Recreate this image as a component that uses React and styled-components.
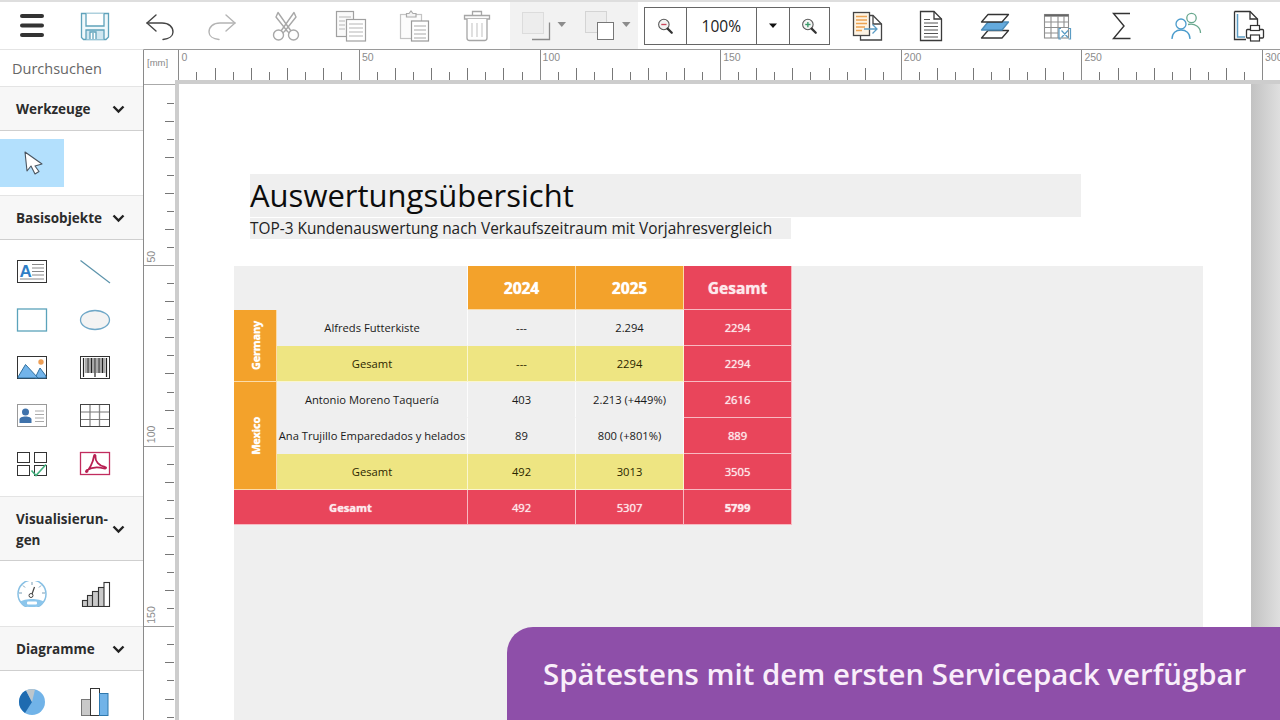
import React from 'react';
import styled, { createGlobalStyle } from 'styled-components';

const Global = createGlobalStyle`
  html, body { margin: 0; padding: 0; background: #fff; }
  body { font-family: "Open Sans", "Noto Sans", sans-serif; }
  * { box-sizing: border-box; }
`;

const Frame = styled.div`
  position: relative; width: 1280px; height: 720px; overflow: hidden;
  display: flex; flex-direction: column; background: #fff;
`;
const Toolbar = styled.header`
  height: 49px; flex: none; display: flex; align-items: center;
  border-top: 2px solid #dedede; background: #fff;
`;
const ToolButton = styled.div`
  width: 63.6px; height: 47px; flex: none;
  display: flex; align-items: center; justify-content: center;
`;
const ToolGroup = styled.div`
  display: flex; width: 128px; height: 47px; margin: 0 6px 0 1px; background: #f2f2f2; flex: none;
`;
const GroupButton = styled.div`
  width: 64px; height: 47px; display: flex; align-items: center;
`;
const ZoomBox = styled.div`
  width: 186px; height: 38px; flex: none; display: flex; border: 1px solid #666; margin-right: 6px;
`;
const ZoomCell = styled.div`
  width: ${p => p.$w}px; flex: none; display: flex; align-items: center; justify-content: center;
  font-size: 15.5px; color: #222;
  & + & { border-left: 1px solid #666; }
`;
const Body = styled.div`
  flex: 1; min-height: 0; display: flex;
`;
const Sidebar = styled.aside`
  width: 144px; flex: none; border-right: 1px solid #8a8a8a; border-top: 1px solid #e4e4e4; overflow: hidden;
`;
const SearchRow = styled.div`
  height: 36px; padding: 9px 0 0 12px; font-size: 14.5px; line-height: 20px; color: #666;
`;
const SectionHeader = styled.div`
  height: ${p => p.$h || 45}px; display: flex; align-items: center; justify-content: space-between;
  padding: 2px 18px 0 16px; background: #f7f7f7;
  border-top: 1px solid #e4e4e4; border-bottom: 1px solid #cfcfcf;
`;
const SectionTitle = styled.span`
  font-size: 13.5px; font-weight: 700; line-height: 21px; color: #2c2c2c;
`;
const ToolGrid = styled.div`
  display: grid; grid-template-columns: 63.5px 63.5px; grid-auto-rows: 48px;
  padding: ${p => p.$pad || '8px 0'};
`;
const ToolCell = styled.div`
  display: flex; align-items: center; justify-content: center;
  background: ${p => (p.$active ? '#b3e0fd' : 'transparent')};
`;
const Main = styled.main`
  flex: 1; min-width: 0; display: flex; border-top: 1px solid #9a9a9a;
`;
const LeftColumn = styled.div`
  width: 31px; flex: none; display: flex; flex-direction: column;
`;
const Corner = styled.div`
  height: 35px; flex: none; padding: 6px 0 0 3px; font-size: 9.5px; line-height: 14px; color: #888;
  font-family: "Liberation Sans", sans-serif; border-bottom: 1px solid #aaa;
`;
const RightColumn = styled.div`
  flex: 1; min-width: 0; display: flex; flex-direction: column;
`;
const RulerSvg = styled.svg`
  display: block; flex: none;
  text { font-family: "Liberation Sans", sans-serif; font-size: 10.5px; fill: #8c8c8c; }
`;
const Canvas = styled.div`
  flex: 1; min-height: 0; display: flex; padding: 4px 0 0 4px; background: #cdcdcd;
`;
const Page = styled.div`
  width: 1072px; flex: none; background: #fff; padding: 90px 0 0 55px;
`;
const Shade = styled.div`
  flex: 1; background: linear-gradient(90deg, #c2c2c2, #dfdfdf);
`;
const TitleBand = styled.div`
  width: 831px; height: 43px; margin-left: 16px; background: #efefef;
  font-size: 31px; line-height: 43px; color: #0c0c0c;
`;
const SubtitleBand = styled.div`
  width: 541px; height: 21px; margin: 1px 0 0 16px; background: #efefef;
  font-size: 15.4px; line-height: 21px; color: #222; white-space: nowrap;
`;
const TableBand = styled.div`
  width: 969px; height: 460px; margin-top: 27px; background: #efefef;
`;
const TableGrid = styled.div`
  display: grid; grid-template-columns: 43px 191px 108px 108px 108px;
  grid-template-rows: 44px 36px 36px 36px 36px 36px 35px; width: 558px;
`;
const tones = {
  plain: { bg: 'transparent', fg: '#1a1a1a', line: 'transparent', side: 'rgba(255,255,255,.8)', glow: 'none' },
  yellow: { bg: '#eee582', fg: '#2a2500', line: '#faf6d0', side: '#faf6d0', glow: 'none' },
  orange: { bg: '#f3a22b', fg: '#fff', line: '#fbdcaa', side: '#fbdcaa', glow: '0 0 1px #fff' },
  red: { bg: '#e9455b', fg: '#fde9ec', line: '#f8b9c2', side: '#f8b9c2', glow: '0 0 1px #fde9ec' },
};
const Cell = styled.div`
  display: flex; align-items: center; justify-content: center; white-space: nowrap;
  grid-column: span ${p => p.$cols || 1}; grid-row: span ${p => p.$rows || 1};
  font-size: ${p => (p.$head ? 15.5 : 11.2)}px; font-weight: ${p => (p.$strong || p.$head ? 700 : 400)};
  background: ${p => tones[p.$tone].bg}; color: ${p => tones[p.$tone].fg};
  text-shadow: ${p => tones[p.$tone].glow};
  border-right: 1px solid ${p => tones[p.$tone].side};
  border-bottom: 1px solid ${p => tones[p.$tone].line};
`;
const RegionText = styled.span`
  writing-mode: vertical-rl; transform: rotate(180deg); font-size: 11px; font-weight: 700; color: #fff;
  letter-spacing: -0.2px;
`;
const Banner = styled.div`
  position: absolute; right: 0; bottom: 0; width: 773px; height: 93px;
  display: flex; align-items: center; padding-left: 36px;
  background: #8e4fa9; border-top-left-radius: 26px;
  font-size: 29.4px; font-weight: 600; color: #f9eefa; white-space: nowrap;
`;

const Icon = ({ w = 40, h = 40, children }) => (
  <svg width={w} height={h} viewBox={`0 0 ${w} ${h}`} fill="none">{children}</svg>
);

const Hamburger = () => (
  <Icon>
    <rect x="8" y="8" width="24" height="4" rx="2" fill="#333" />
    <rect x="8" y="17.500" width="24" height="4" rx="2" fill="#333" />
    <rect x="8" y="27" width="24" height="4" rx="2" fill="#333" />
  </Icon>
);
const Save = () => (
  <Icon>
    <g stroke="#5fa2bb" strokeWidth="1.3">
      <path d="M6.500 7.500H33.500V31L31 33.500H8.500L6.500 31.500Z" fill="#f0f8fb" />
      <path d="M11 7.500V20H29V7.500" fill="#fff" />
      <path d="M11 33.500V24H29V33.500" fill="#cfe6f0" />
      <path d="M15 33V26H21V33" fill="#fff" />
      <path d="M18 27V33" />
    </g>
  </Icon>
);
const Undo = ({ c = '#444', flip }) => (
  <Icon>
    <g transform={flip ? 'matrix(-1 0 0 1 40 0)' : undefined} stroke={c} strokeWidth="1.400" strokeLinecap="round" strokeLinejoin="round">
      <path d="M17 9L8 17L17 25" />
      <path d="M8 17H23C30 17 34 21 34 26C34 30 30 33 24 33.500" />
    </g>
  </Icon>
);
const Scissors = () => (
  <Icon>
    <g stroke="#a8a8a8" strokeWidth="1.400" strokeLinejoin="round">
      <circle cx="12.500" cy="29" r="5" />
      <circle cx="27.500" cy="29" r="5" />
      <path d="M15 25L28 6.500L30 11L18.500 25.500L16.500 27" />
      <path d="M25 25L12 6.500L10 11L21.500 25.500L23.500 27" />
    </g>
  </Icon>
);
const Copy = () => (
  <Icon>
    <g stroke="#a0a0a0" strokeWidth="1.200">
      <rect x="6.500" y="5.500" width="17" height="25" fill="#fafafa" />
      <rect x="16.500" y="13.500" width="19" height="21.500" fill="#fff" />
      <path d="M9 11H21M9 15H15M9 19H15M9 23H15M19 18H33M19 22H33M19 26H33M19 30H33" stroke="#b5b5b5" />
    </g>
  </Icon>
);
const Paste = () => (
  <Icon>
    <g stroke="#c4c4c4" strokeWidth="1.200">
      <rect x="7.500" y="8.500" width="21" height="24" fill="#fcfcfc" />
      <path d="M13.500 11V7.500H16L18 5L20 7.500H23V11Z" fill="#f4f4f4" stroke="#aaa" />
      <rect x="18.500" y="15" width="17" height="20" fill="#fff" stroke="#999" />
      <path d="M21 20H33M21 24H33M21 28H33M21 32H33" stroke="#aaa" />
    </g>
  </Icon>
);
const Trash = () => (
  <Icon>
    <g stroke="#a6a6a6" strokeWidth="1.300">
      <path d="M7.500 9.500H32.500V13H7.500Z" fill="#fafafa" />
      <path d="M15.500 9.500V5.500H24.500V9.500" />
      <path d="M10 13V32C10 33.500 11 34.500 12.500 34.500H27.500C29 34.500 30 33.500 30 32V13" fill="#fff" />
      <path d="M15 17V31M20 17V31M25 17V31" stroke="#cfcfcf" />
    </g>
  </Icon>
);
const DupBack = () => (
  <Icon w={64}>
    <path d="M39.500 16.500V33.500H22" stroke="#8a8a8a" strokeWidth="1.300" />
    <rect x="12.500" y="6.500" width="21" height="21" fill="#ededed" stroke="#dcdcdc" />
    <path d="M47.500 16H56L51.800 21Z" fill="#8c8c8c" />
  </Icon>
);
const DupFront = () => (
  <Icon w={64}>
    <rect x="11.500" y="5.500" width="21" height="21" fill="#ededed" stroke="#d4d4d4" />
    <rect x="23.500" y="16.500" width="16" height="17" fill="#fff" stroke="#777" />
    <path d="M48 16H56.500L52.300 21Z" fill="#8c8c8c" />
  </Icon>
);
const Magnifier = ({ plus }) => (
  <svg width="18" height="18" viewBox="0 0 24 24" fill="none">
    <circle cx="10.500" cy="10" r="7" fill="#f3f3f3" stroke="#555" strokeWidth="1.400" />
    <path d="M15.500 15.500L21 21" stroke="#333" strokeWidth="3" strokeLinecap="round" />
    <path d="M7 10H14" stroke={plus ? '#3a9a6a' : '#c9455a'} strokeWidth="1.800" />
    {plus && <path d="M10.500 6.500V13.500" stroke="#3a9a6a" strokeWidth="1.800" />}
  </svg>
);
const Caret = () => (
  <Icon w={10} h={8}>
    <path d="M1 1.500H9L5 6Z" fill="#111" />
  </Icon>
);
const ExportDoc = () => (
  <Icon>
    <g strokeWidth="1.300">
      <path d="M12.500 9.500H25L33.500 18V34H12.500Z" fill="#fff" stroke="#444" />
      <path d="M25 9.500V18H33.500" stroke="#444" />
      <rect x="5.500" y="6.500" width="16" height="23" fill="#fdf3e3" stroke="#444" />
      <path d="M8 10.500H19M8 14H19M8 17.500H19M8 21H17M8 24.500H14" stroke="#eda352" />
      <path d="M16 23H29M24.500 18.500L29 23L24.500 27.500" stroke="#5b9cc4" />
    </g>
  </Icon>
);
const Doc = () => (
  <Icon>
    <g stroke="#3a3a3a" strokeWidth="1.300">
      <path d="M9.500 5.500H23L30.500 13V34.500H9.500Z" fill="#fff" />
      <path d="M23 5.500V13H30.500" />
      <path d="M13 17H27M13 20.500H27M13 24H27M13 27.500H27M13 31H27M13 13.500H19" stroke="#555" strokeWidth="1" />
    </g>
  </Icon>
);
const Layers = () => (
  <Icon>
    <g stroke="#333" strokeWidth="1.300" strokeLinejoin="round">
      <path d="M13 24.500H33.500L27 32H6.500Z" fill="#fff" />
      <path d="M13 16H33.500L27 24H6.500Z" fill="#64aadd" stroke="#4a8bb8" />
      <path d="M13 8.500H33.500L27 16H6.500Z" fill="#fff" />
    </g>
  </Icon>
);
const TableX = () => (
  <Icon>
    <g stroke="#8f8f8f" strokeWidth="1.100">
      <rect x="6.500" y="8.500" width="24" height="23.500" fill="#fff" />
      <path d="M6.500 9.500H30.500" stroke="#666" strokeWidth="2.200" />
      <path d="M6.500 16H30.500M6.500 21.500H30.500M6.500 27H20M13 10V32M20 10V32M26 10V22" />
    </g>
    <path d="M23 22.500H21V33H23M30.500 22.500H32.500V33H30.500M23.500 24.500L30 31.500M30 24.500L23.500 31.500" stroke="#5b9cc4" strokeWidth="1.200" />
  </Icon>
);
const Sigma = () => (
  <Icon>
    <path d="M28 7.500H11.500L22 20L11.500 32.500H28.500" stroke="#333" strokeWidth="1.400" />
  </Icon>
);
const Users = () => (
  <Icon>
    <circle cx="25.500" cy="12" r="4.700" stroke="#69a88e" strokeWidth="1.300" />
    <path d="M22 18.500C29 17 34.500 21 34.500 27" stroke="#69a88e" strokeWidth="1.300" />
    <circle cx="15" cy="18" r="5" fill="#fff" stroke="#4b9ccc" strokeWidth="1.300" />
    <path d="M6 33C6 27 10 24 15 24C20 24 24 27 24 33" stroke="#4b9ccc" strokeWidth="1.300" />
  </Icon>
);
const PrintDoc = () => (
  <Icon>
    <path d="M5.500 5.500H21L28.500 13V25" stroke="#333" strokeWidth="1.300" />
    <path d="M21 5.500V13H28.500" stroke="#333" strokeWidth="1.300" />
    <path d="M5.500 5.500V33.500H17" stroke="#333" strokeWidth="1.300" />
    <path d="M8.500 8V31H16" stroke="#5b9cc4" strokeWidth="1.500" />
    <rect x="17.500" y="23.500" width="17" height="8.500" rx="1" fill="#fff" stroke="#333" strokeWidth="1.300" />
    <rect x="21.500" y="19.500" width="9" height="5" fill="#fff" stroke="#333" strokeWidth="1.200" />
    <rect x="21.500" y="29" width="9" height="6" fill="#fff" stroke="#333" strokeWidth="1.200" />
  </Icon>
);

const Chevron = () => (
  <svg width="13" height="9" viewBox="0 0 13 9" fill="none">
    <path d="M1.500 1.500L6.500 6.500L11.500 1.500" stroke="#222" strokeWidth="2.400" />
  </svg>
);
const Pointer = () => (
  <Icon w={24} h={28}>
    <path d="M5 3L7 22L11 17L15 25L19 22.500L15 17L22 15Z" fill="#fff" stroke="#4a5560" strokeWidth="1.100" strokeLinejoin="round" />
  </Icon>
);
const S = ({ children }) => <Icon w={32} h={26}>{children}</Icon>;
const TextObj = () => (
  <S>
    <rect x="1.500" y="1.500" width="29" height="22" fill="#fff" stroke="#333" />
    <text x="3.500" y="17.500" fontFamily="Liberation Sans" fontWeight="700" fontSize="17" fill="#2f7ec6">A</text>
    <path d="M16 5.500H28M16 9H28M16 12.500H28M16 16H28M4 20H28" stroke="#888" />
  </S>
);
const LineObj = () => <S><path d="M1.500 1.500L31 24" stroke="#5c93ab" strokeWidth="1.200" /></S>;
const RectObj = () => <S><rect x="1.500" y="2" width="29" height="22" fill="#fff" stroke="#5ba3bb" strokeWidth="1.300" /></S>;
const EllipseObj = () => <S><ellipse cx="16" cy="13" rx="14.500" ry="9.500" fill="#f3f3f3" stroke="#6ea7c7" strokeWidth="1.300" /></S>;
const ImageObj = () => (
  <S>
    <rect x="1.500" y="1.500" width="29" height="22" fill="#fff" stroke="#333" />
    <path d="M19 23L24 13L30 21V23Z" fill="#72b4ea" stroke="#2f6f9e" />
    <path d="M2 22L9.500 9.500L22 23H2Z" fill="#72b4ea" stroke="#2f6f9e" />
    <circle cx="25" cy="7" r="2.700" fill="#ee9f55" />
  </S>
);
const BarcodeObj = () => (
  <S>
    <rect x="1.500" y="1.500" width="29" height="22" fill="#fff" stroke="#333" />
    <path d="M7 3V18M10.700 3V18M14.300 3V18M18 3V18M21.700 3V18M25.300 3V18" stroke="#aaa" strokeWidth="2.400" />
    <path d="M4.500 3V22M9 3V18M12.500 3V18M16 3V22M20 3V18M23.500 3V18M27.500 3V22" stroke="#222" strokeWidth="1.200" />
  </S>
);
const ContactObj = () => (
  <S>
    <rect x="1.500" y="1.500" width="29" height="22" fill="#fff" stroke="#999" />
    <circle cx="9.500" cy="9" r="3.500" fill="#3f72ab" />
    <path d="M3.500 20V16.500C3.500 14.500 6 13.500 9.500 13.500C13 13.500 15.500 14.500 15.500 16.500V20Z" fill="#3f72ab" />
    <path d="M19 8H28M19 11.500H28M19 15H28M19 18.500H28" stroke="#aaa" />
  </S>
);
const TableObj = () => (
  <S>
    <rect x="1.500" y="1.500" width="29" height="22" fill="#fff" stroke="#444" />
    <path d="M11 2V23M20.500 2V23" stroke="#888" strokeWidth="1.300" />
    <path d="M2 9H30M2 16.500H30" stroke="#777" />
  </S>
);
const FormObj = () => (
  <S>
    <g stroke="#333" fill="#fff">
      <rect x="1.500" y="1.500" width="12" height="10" />
      <rect x="18.500" y="1.500" width="12" height="10" />
      <rect x="1.500" y="14.500" width="12" height="10" />
      <rect x="18.500" y="14.500" width="12" height="10" />
    </g>
    <path d="M15.500 19.500L20 24.500L30 13.500" stroke="#43b07e" strokeWidth="1.600" />
  </S>
);
const PdfObj = () => (
  <S>
    <rect x="1.500" y="1.500" width="29" height="22" fill="#fff" stroke="#c12c5e" strokeWidth="1.300" />
    <path d="M7 21C10 19 14 12 15 5C15.500 3 17 4 16.500 6C16 10 20 15 26 16C28 16.500 27 18 25 17.500C20 16 13 16 8 19C6 20.500 7 22 9 20" stroke="#b81f52" strokeWidth="1.800" />
  </S>
);
const GaugeObj = () => (
  <S>
    <circle cx="16" cy="13" r="14" fill="#fff" stroke="#88c0e4" strokeWidth="1.500" />
    <path d="M4 21C8 17 24 17 28 21C23 28 9 28 4 21Z" fill="#8cc6ec" />
    <rect x="11" y="20.500" width="10" height="3" rx="1" fill="#fff" />
    <path d="M16 1V4M7 4.500L9 6.500M25 4.500L23 6.500M3 12H6M29 12H26" stroke="#7a9db5" />
    <circle cx="15" cy="14.500" r="2" stroke="#444" />
    <path d="M16 13L18.500 6" stroke="#444" strokeWidth="1.200" />
  </S>
);
const StairObj = () => (
  <S>
    <g stroke="#333" strokeWidth="1.100" fill="#c9c9c9">
      <rect x="3.500" y="19.500" width="5" height="6" />
      <rect x="8.500" y="14.500" width="5" height="11" />
      <rect x="13.500" y="10.500" width="6" height="15" />
      <rect x="19.500" y="6.500" width="6" height="19" />
      <rect x="25" y="1.500" width="5.500" height="24" fill="#fff" />
    </g>
  </S>
);
const PieObj = () => (
  <S>
    <circle cx="16" cy="13" r="13" fill="#71b3e8" />
    <path d="M16 13L10 1.500C6 3 3 8 3 13C3 17 5 21 9 24Z" fill="#1e6bb0" />
    <path d="M16 13L10 1.500C12 0.500 16 0 19 0.500Z" fill="#bcc6cc" />
  </S>
);
const ColumnObj = () => (
  <Icon w={32} h={30}>
    <rect x="2.500" y="12.500" width="9" height="16" fill="#c9c9c9" stroke="#777" />
    <rect x="11.500" y="1.500" width="9" height="27" fill="#fff" stroke="#333" />
    <rect x="20.500" y="6.500" width="8.500" height="22" fill="#71b3e8" stroke="#2f78ad" />
  </Icon>
);

const MM = 18.06;
const TopRuler = () => {
  const ticks = Array.from({ length: 62 }, (_, i) => i);
  return (
    <RulerSvg width="1105" height="30">
      {ticks.map(i => {
        const x = Math.round(3.4 + i * MM) + 0.5;
        const top = i % 10 === 0 ? 0 : i % 2 === 0 ? 18 : 22;
        return <path key={i} d={`M${x} ${top}V30`} stroke={i % 10 === 0 ? '#8a8a8a' : '#777'} strokeWidth="1" />;
      })}
      {ticks.filter(i => i % 10 === 0).map(i => (
        <text key={i} x={3.4 + i * MM + 3} y="11">{i * 5}</text>
      ))}
    </RulerSvg>
  );
};
const LeftRuler = () => {
  const ticks = Array.from({ length: 36 }, (_, i) => i + 1);
  return (
    <RulerSvg width="31" height="636">
      {ticks.map(i => {
        const y = Math.round(i * MM - 0.5) + 0.5;
        const major = i % 10 === 0;
        return <path key={i} d={`M${major ? 0 : i % 2 === 0 ? 21 : 23} ${y}H30`} stroke={major ? '#999' : '#777'} />;
      })}
      {ticks.filter(i => i % 10 === 0).map(i => {
        const y = i * MM - 3;
        return <text key={i} transform={`translate(11 ${y}) rotate(-90)`}>{i * 5}</text>;
      })}
    </RulerSvg>
  );
};

const rows = [
  { region: 'Germany', span: 2, name: 'Alfreds Futterkiste', a: '---', b: '2.294', t: '2294' },
  { name: 'Gesamt', a: '---', b: '2294', t: '2294', sum: true },
  { region: 'Mexico', span: 3, name: 'Antonio Moreno Taquería', a: '403', b: '2.213 (+449%)', t: '2616' },
  { name: 'Ana Trujillo Emparedados y helados', a: '89', b: '800 (+801%)', t: '889' },
  { name: 'Gesamt', a: '492', b: '3013', t: '3505', sum: true },
];

const ReportTable = () => (
  <TableGrid>
    <Cell $tone="plain" $cols={2} />
    <Cell $tone="orange" $head>2024</Cell>
    <Cell $tone="orange" $head>2025</Cell>
    <Cell $tone="red" $head>Gesamt</Cell>
    {rows.map((r, i) => {
      const tone = r.sum ? 'yellow' : 'plain';
      return (
        <React.Fragment key={i}>
          {r.region && (
            <Cell $tone="orange" $rows={r.span}><RegionText>{r.region}</RegionText></Cell>
          )}
          <Cell $tone={tone}>{r.name}</Cell>
          <Cell $tone={tone}>{r.a}</Cell>
          <Cell $tone={tone}>{r.b}</Cell>
          <Cell $tone="red">{r.t}</Cell>
        </React.Fragment>
      );
    })}
    <Cell $tone="red" $cols={2} $strong>Gesamt</Cell>
    <Cell $tone="red">492</Cell>
    <Cell $tone="red">5307</Cell>
    <Cell $tone="red" $strong>5799</Cell>
  </TableGrid>
);

const Section = ({ title, h, pad, tools }) => (
  <>
    <SectionHeader $h={h}><SectionTitle>{title}</SectionTitle><Chevron /></SectionHeader>
    <ToolGrid $pad={pad}>
      {tools.map((T, i) => <ToolCell key={i}><T /></ToolCell>)}
    </ToolGrid>
  </>
);

export default function App() {
  return (
    <Frame>
      <Global />
      <Toolbar>
        {[Hamburger, Save, Undo].map((T, i) => <ToolButton key={i}><T /></ToolButton>)}
        <ToolButton><Undo c="#b4b4b4" flip /></ToolButton>
        {[Scissors, Copy, Paste, Trash].map((T, i) => <ToolButton key={i}><T /></ToolButton>)}
        <ToolGroup>
          <GroupButton><DupBack /></GroupButton>
          <GroupButton><DupFront /></GroupButton>
        </ToolGroup>
        <ZoomBox>
          <ZoomCell $w={41}><Magnifier /></ZoomCell>
          <ZoomCell $w={70}>100%</ZoomCell>
          <ZoomCell $w={33}><Caret /></ZoomCell>
          <ZoomCell $w={40}><Magnifier plus /></ZoomCell>
        </ZoomBox>
        {[ExportDoc, Doc, Layers, TableX, Sigma, Users, PrintDoc].map((T, i) => <ToolButton key={i}><T /></ToolButton>)}
      </Toolbar>
      <Body>
        <Sidebar>
          <SearchRow>Durchsuchen</SearchRow>
          <SectionHeader><SectionTitle>Werkzeuge</SectionTitle><Chevron /></SectionHeader>
          <ToolGrid>
            <ToolCell $active><Pointer /></ToolCell>
          </ToolGrid>
          <Section title="Basisobjekte" tools={[TextObj, LineObj, RectObj, EllipseObj, ImageObj, BarcodeObj, ContactObj, TableObj, FormObj, PdfObj]} />
          <Section title={<>Visualisierun-<br />gen</>} h={65} pad="9px 0 8px" tools={[GaugeObj, StairObj]} />
          <Section title="Diagramme" pad="7px 0" tools={[PieObj, ColumnObj]} />
        </Sidebar>
        <Main>
          <LeftColumn>
            <Corner>[mm]</Corner>
            <LeftRuler />
          </LeftColumn>
          <RightColumn>
            <TopRuler />
            <Canvas>
              <Page>
                <TitleBand>Auswertungsübersicht</TitleBand>
                <SubtitleBand>TOP-3 Kundenauswertung nach Verkaufszeitraum mit Vorjahresvergleich</SubtitleBand>
                <TableBand><ReportTable /></TableBand>
              </Page>
              <Shade />
            </Canvas>
          </RightColumn>
        </Main>
      </Body>
      <Banner>Spätestens mit dem ersten Servicepack verfügbar</Banner>
    </Frame>
  );
}
